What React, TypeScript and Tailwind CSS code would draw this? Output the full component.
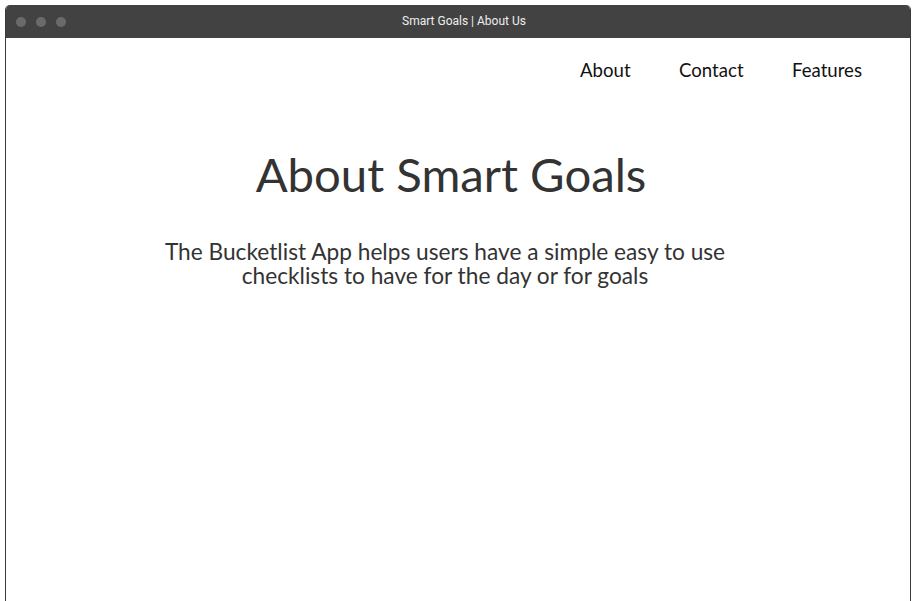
import React from "react";

const navLinks = ["About", "Contact", "Features"];

export default function App() {
  return (
    <div className="w-[914px] h-[601px] bg-white overflow-hidden pt-[5px] pl-[5px] pr-[3px]">
      <div className="flex flex-col h-full rounded-t-[5px] overflow-hidden border-x border-[#3a3a3a]">
        {/* TITLE BAR */}
        <div className="relative h-[33px] shrink-0 bg-[#424242] flex items-center">
          <div className="flex gap-[10px] pl-[10px]">
            <span className="w-[10px] h-[10px] rounded-full bg-[#6a6a6a]" />
            <span className="w-[10px] h-[10px] rounded-full bg-[#6a6a6a]" />
            <span className="w-[10px] h-[10px] rounded-full bg-[#6a6a6a]" />
          </div>
          <div className="absolute inset-0 pl-[12px] pb-[2px] flex items-center justify-center text-[12px] text-[#eeeeee] font-['Roboto',sans-serif]">
            Smart Goals | About Us
          </div>
        </div>

        {/* PAGE */}
        <div className="flex-1 bg-white font-['Lato',sans-serif] text-[#333333]">
          <nav className="flex justify-end gap-[48.5px] pr-[48px] pt-[20px] text-[18.6px] text-[#111111]">
            {navLinks.map((link) => (
              <a key={link} href="#" className="leading-[24px]">
                {link}
              </a>
            ))}
          </nav>

          <div className="flex flex-col items-center pr-[14px]">
            <h1 className="mt-[62px] text-[47.3px] leading-[60px] font-normal">
              About Smart Goals
            </h1>
            <p className="mt-[36px] mr-[12px] max-w-[600px] text-center text-[22.7px] leading-[24px]">
              The Bucketlist App helps users have a simple easy to use checklists to have for the day or for goals
            </p>
          </div>
        </div>
      </div>
    </div>
  );
}
